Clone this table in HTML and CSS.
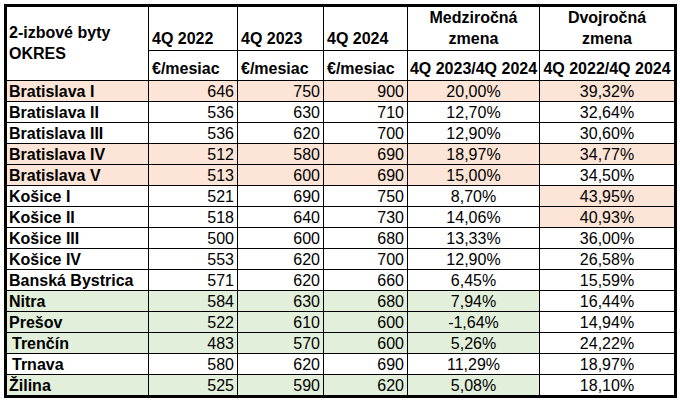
FILE: index.html
```html
<!DOCTYPE html>
<html lang="sk">
<head>
<meta charset="utf-8">
<title>2-izbové byty</title>
<link rel="stylesheet" href="styles.css">
</head>
<body>
<table class="grid">
  <colgroup>
    <col class="c1"><col class="c2"><col class="c3"><col class="c4"><col class="c5"><col class="c6">
  </colgroup>
  <thead>
    <tr class="h1">
      <th class="name-h" rowspan="2">2-izbové byty<br>OKRES</th>
      <th class="lh">4Q 2022</th>
      <th class="lh">4Q 2023</th>
      <th class="lh">4Q 2024</th>
      <th class="ch">Medziročná<br>zmena</th>
      <th class="ch last">Dvojročná<br>zmena</th>
    </tr>
    <tr class="h2">
      <th class="lh">€/mesiac</th>
      <th class="lh">€/mesiac</th>
      <th class="lh">€/mesiac</th>
      <th class="ch">4Q 2023/4Q 2024</th>
      <th class="ch last">4Q 2022/4Q 2024</th>
    </tr>
  </thead>
  <tbody>
    <tr class="peach"><td class="nm">Bratislava I</td><td class="n">646</td><td class="n">750</td><td class="n">900</td><td class="p">20,00%</td><td class="p last">39,32%</td></tr>
    <tr><td class="nm">Bratislava II</td><td class="n">536</td><td class="n">630</td><td class="n">710</td><td class="p">12,70%</td><td class="p last">32,64%</td></tr>
    <tr><td class="nm">Bratislava III</td><td class="n">536</td><td class="n">620</td><td class="n">700</td><td class="p">12,90%</td><td class="p last">30,60%</td></tr>
    <tr class="peach"><td class="nm">Bratislava IV</td><td class="n">512</td><td class="n">580</td><td class="n">690</td><td class="p">18,97%</td><td class="p last">34,77%</td></tr>
    <tr class="peach"><td class="nm">Bratislava V</td><td class="n">513</td><td class="n">600</td><td class="n">690</td><td class="p">15,00%</td><td class="p last plain">34,50%</td></tr>
    <tr><td class="nm">Košice I</td><td class="n">521</td><td class="n">690</td><td class="n">750</td><td class="p">8,70%</td><td class="p last hl">43,95%</td></tr>
    <tr><td class="nm">Košice II</td><td class="n">518</td><td class="n">640</td><td class="n">730</td><td class="p">14,06%</td><td class="p last hl">40,93%</td></tr>
    <tr><td class="nm">Košice III</td><td class="n">500</td><td class="n">600</td><td class="n">680</td><td class="p">13,33%</td><td class="p last">36,00%</td></tr>
    <tr><td class="nm">Košice IV</td><td class="n">553</td><td class="n">620</td><td class="n">700</td><td class="p">12,90%</td><td class="p last">26,58%</td></tr>
    <tr><td class="nm">Banská Bystrica</td><td class="n">571</td><td class="n">620</td><td class="n">660</td><td class="p">6,45%</td><td class="p last">15,59%</td></tr>
    <tr class="green"><td class="nm">Nitra</td><td class="n">584</td><td class="n">630</td><td class="n">680</td><td class="p">7,94%</td><td class="p last plain">16,44%</td></tr>
    <tr class="green"><td class="nm">Prešov</td><td class="n">522</td><td class="n">610</td><td class="n">600</td><td class="p">-1,64%</td><td class="p last plain">14,94%</td></tr>
    <tr class="green"><td class="nm ind">Trenčín</td><td class="n">483</td><td class="n">570</td><td class="n">600</td><td class="p">5,26%</td><td class="p last plain">24,22%</td></tr>
    <tr><td class="nm ind">Trnava</td><td class="n">580</td><td class="n">620</td><td class="n">690</td><td class="p">11,29%</td><td class="p last">18,97%</td></tr>
    <tr class="green lastrow"><td class="nm">Žilina</td><td class="n">525</td><td class="n">590</td><td class="n">620</td><td class="p">5,08%</td><td class="p last plain">18,10%</td></tr>
  </tbody>
</table>
</body>
</html>
```

FILE: styles.css
```css
html, body {
  margin: 0;
  padding: 0;
  background: #ffffff;
}

body {
  padding: 4px 0 0 4px;
  font-family: "Liberation Sans", Arial, sans-serif;
  color: #000;
}

.grid {
  border-collapse: separate;
  border-spacing: 0;
  border: 3px solid #000;
  table-layout: fixed;
  width: 673px;
  font-size: 16px;
}

.c1 { width: 142px; }
.c2 { width: 89px; }
.c3 { width: 86px; }
.c4 { width: 84px; }
.c5 { width: 132px; }
.c6 { width: 134px; }

th, td {
  padding: 0;
  border-right: 1px solid #000;
  border-bottom: 1px solid #000;
  white-space: nowrap;
  overflow: hidden;
}

.last { border-right: none; }

th {
  font-weight: bold;
  vertical-align: bottom;
  line-height: 21px;
}

.h1 th { height: 41px; padding-bottom: 1px; }
.h2 th { height: 28px; padding-bottom: 1px; }

.name-h {
  text-align: left;
  vertical-align: middle;
  padding: 0 0 4px 2px;
  line-height: 21px;
}

.lh { text-align: left; padding-left: 3px; }
.ch { text-align: center; }

td {
  height: 20px;
  line-height: 18px;
  vertical-align: bottom;
}

.lastrow td { border-bottom: none; }

.nm {
  font-weight: bold;
  text-align: left;
  padding-left: 2px;
}

.nm.ind { padding-left: 5px; }

.n {
  text-align: right;
  padding-right: 3px;
}

.p { text-align: center; }

.peach td { background: #fce4d6; }
.green td { background: #e2efda; }
.peach td.plain, .green td.plain { background: #ffffff; }
td.hl { background: #fce4d6; }
```
